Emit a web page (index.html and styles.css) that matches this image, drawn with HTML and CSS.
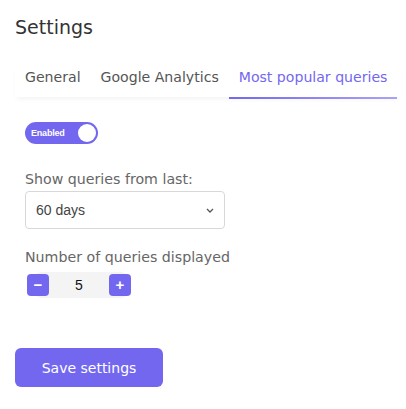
FILE: index.html
```html
<!DOCTYPE html>
<html lang="en">
<head>
    <meta charset="UTF-8">
    <title>Settings</title>
    <link rel="stylesheet" href="styles.css">
</head>
<body>
<div class="panel">
    <h2 class="title">Settings</h2>

    <!-- tabs -->
    <div class="tabs">
        <div class="tab">General</div>
        <div class="tab">Google Analytics</div>
        <div class="tab active">Most popular queries</div>
    </div>

    <div class="content">
        <div class="toggle">
            <span class="toggle-label">Enabled</span>
            <span class="knob"></span>
        </div>

        <div class="field">
            <label class="field-label">Show queries from last:</label>
            <div class="select">
                <span>60 days</span>
                <svg class="chevron" width="8" height="5" viewBox="0 0 8 5">
                    <path d="M1 1l3 3 3-3" fill="none" stroke="#555" stroke-width="1.3"/>
                </svg>
            </div>
        </div>

        <div class="field">
            <label class="field-label">Number of queries displayed</label>
            <div class="stepper">
                <button class="step-btn">−</button>
                <span class="step-value">5</span>
                <button class="step-btn">+</button>
            </div>
        </div>
    </div>

    <button class="save-btn">Save settings</button>
</div>
</body>
</html>
```

FILE: styles.css
```css
* {
    margin: 0;
    padding: 0;
    box-sizing: border-box;
}

body {
    font-family: 'DejaVu Sans', 'Noto Sans', sans-serif;
    background: #fff;
    color: #555;
}

.panel {
    padding: 16px 0 0 15px;
}

.title {
    font-size: 19px;
    font-weight: 400;
    color: #333;
    line-height: 22px;
}

/* tabs */
.tabs {
    display: flex;
    width: 386px;
    margin-top: 24px;
    box-shadow: 0 4px 5px -2px rgba(0,0,0,0.05);
}

.tab {
    font-size: 14.1px;
    color: #555;
    padding: 6px 10px 10px 10px;
    line-height: 19px;
    white-space: nowrap;
    flex-shrink: 0;
}

.tab.active {
    color: #7367f0;
    position: relative;
}

.tab.active::after {
    content: '';
    position: absolute;
    left: 0;
    right: 0;
    bottom: -2px;
    height: 2px;
    background: linear-gradient(to right, #7367f0, #a9a3f6);
}

.content {
    padding: 0 10px;
}

/* toggle */
.toggle {
    margin-top: 25px;
    width: 73px;
    height: 22px;
    border-radius: 11px;
    background: #7367f0;
    display: flex;
    align-items: center;
    justify-content: space-between;
    padding: 0 2px 0 6px;
}

.toggle-label {
    font-family: 'Liberation Sans', Arial, sans-serif;
    font-size: 9px;
    font-weight: 700;
    color: #fff;
    letter-spacing: -0.2px;
}

.knob {
    width: 18px;
    height: 18px;
    border-radius: 50%;
    background: #fff;
}

.field {
    margin-top: 26px;
}

.field + .field {
    margin-top: 19px;
}

.field-label {
    display: block;
    font-size: 14.2px;
    color: #666;
    line-height: 19px;
}

.select {
    margin-top: 2px;
    width: 200px;
    height: 38px;
    border: 1px solid #d8d8d8;
    border-radius: 4px;
    display: flex;
    align-items: center;
    justify-content: space-between;
    padding: 0 10px 0 10px;
    font-family: 'Liberation Sans', Arial, sans-serif;
    font-size: 14px;
    color: #444;
}

/* stepper */
.stepper {
    margin-top: 5px;
    margin-left: 2px;
    width: 104px;
    display: flex;
    align-items: center;
    justify-content: space-between;
    position: relative;
    height: 26px;
}

.stepper::before {
    content: '';
    position: absolute;
    left: 8px;
    right: 4px;
    top: 0;
    bottom: 0;
    background: #f4f4f4;
    border-radius: 6px;
    z-index: -1;
}

.step-btn {
    width: 22px;
    height: 22px;
    border: none;
    border-radius: 4px;
    background: #7367f0;
    color: #fff;
    font-size: 15px;
    line-height: 22px;
    font-family: 'Liberation Sans', Arial, sans-serif;
    font-weight: 700;
}

.step-value {
    font-family: 'Liberation Sans', Arial, sans-serif;
    font-size: 14px;
    color: #111;
}

.save-btn {
    margin-top: 50px;
    width: 148px;
    height: 39px;
    border: none;
    border-radius: 6px;
    background: #7367f0;
    color: #fff;
    font-family: 'DejaVu Sans', sans-serif;
    font-size: 14px;
    cursor: pointer;
}
```
